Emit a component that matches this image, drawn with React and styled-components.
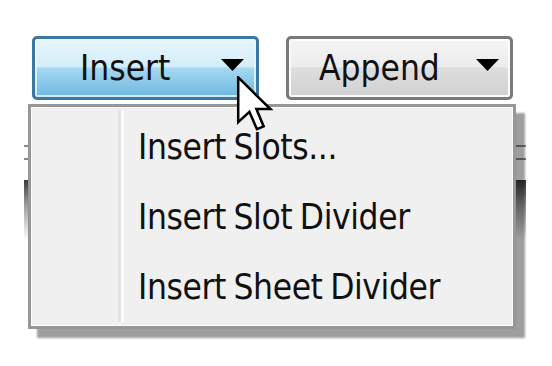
import React from "react";
import styled, { createGlobalStyle } from "styled-components";

const Global = createGlobalStyle`
  html, body { margin: 0; padding: 0; background: #ffffff; }
  body { width: 552px; height: 366px; overflow: hidden; font-family: "DejaVu Sans Condensed", "DejaVu Sans", sans-serif; }
`;

const Stage = styled.div`
  position: relative;
  width: 552px;
  height: 366px;
  padding: 36px 0 0 32px;
  box-sizing: border-box;
`;

const Row = styled.div`
  display: flex;
  gap: 27px;
`;

const Button = styled.div`
  box-sizing: border-box;
  width: 227px;
  height: 64px;
  border: 3px solid ${(p) => (p.$active ? "#3b77a2" : "#7a7a7a")};
  border-radius: 5px;
  box-shadow: inset 0 0 0 2px ${(p) => (p.$active ? "rgba(235,247,253,0.8)" : "#fafafa")};
  background: ${(p) =>
    p.$active
      ? "linear-gradient(#e9f6fd 0%, #d3edfa 48%, #a6d8f2 50%, #6fb8e0 100%)"
      : "linear-gradient(#f4f4f4 0%, #ececec 48%, #dedede 50%, #d0d0d0 100%)"};
  display: flex;
  align-items: center;
  font-size: 35px;
  color: #111;
  padding-left: ${(p) => p.$pad}px;
`;

const Label = styled.span`
  width: ${(p) => p.$w}px;
`;

const Arrow = styled.svg`
  width: 23px;
  height: 12px;
  margin-top: -6px;
`;

const Backdrop = styled.div`
  margin: 45px 0 0 -8px;
  width: 502px;
  height: 100px;
  display: flex;
  flex-direction: column;
`;

const Rule = styled.div`
  height: 2px;
  background: ${(p) => p.$c};
  margin-top: ${(p) => p.$gap}px;
`;

const Shade = styled.div`
  margin-top: 20px;
  height: 60px;
  background: linear-gradient(#3a3a3a, #9a9a9a 40%, #ffffff);
`;

const Menu = styled.div`
  position: absolute;
  left: 28px;
  top: 104px;
  box-sizing: border-box;
  width: 488px;
  height: 225px;
  border: 3px solid #979797;
  background: #f0f0f0;
  box-shadow: inset 0 0 0 1px #fbfbfb, 9px 9px 2px rgba(0, 0, 0, 0.38);
  padding: 5px 0 4px 0;
  display: flex;
  flex-direction: column;
`;

const Gutter = styled.div`
  position: absolute;
  top: 4px;
  bottom: 4px;
  left: 87px;
  width: 6px;
  border-left: 3px solid #e2e2e2;
  border-right: 3px solid #ffffff;
  box-sizing: border-box;
`;

const Item = styled.div`
  height: 70px;
  display: flex;
  align-items: center;
  padding-left: 107px;
  font-size: 35px;
  letter-spacing: -0.4px;
  word-spacing: -2px;
  color: #111;
`;

const Cursor = styled.svg`
  position: absolute;
  left: 236px;
  top: 76px;
  width: 38px;
  height: 56px;
`;

export default function App() {
  return (
    <>
      <Global />
      <Stage>
        <Row>
          <Button $active $pad={45}>
            <Label $w={141}>Insert</Label>
            <Arrow viewBox="0 0 23 12">
              <path d="M0 0 H23 L11.5 12 Z" fill="#000" />
            </Arrow>
          </Button>
          <Button $pad={30}>
            <Label $w={157}>Append</Label>
            <Arrow viewBox="0 0 23 12">
              <path d="M0 0 H23 L11.5 12 Z" fill="#000" />
            </Arrow>
          </Button>
        </Row>
        <Backdrop>
          <Rule $c="#8a8a9e" $gap={0} />
          <Rule $c="#8c8c8c" $gap={11} />
          <Shade />
        </Backdrop>
        <Menu>
          <Gutter />
          <Item>Insert Slots...</Item>
          <Item>Insert Slot Divider</Item>
          <Item>Insert Sheet Divider</Item>
        </Menu>
        <Cursor viewBox="0 0 13 20">
          <path
            d="M0.5 0.5 L0.5 16.5 L4.5 12.8 L7.2 19 L9.6 18 L7 11.8 L12 11.8 Z"
            fill="#ffffff"
            stroke="#000"
            strokeWidth="0.9"
            strokeLinejoin="miter"
          />
        </Cursor>
      </Stage>
    </>
  );
}
